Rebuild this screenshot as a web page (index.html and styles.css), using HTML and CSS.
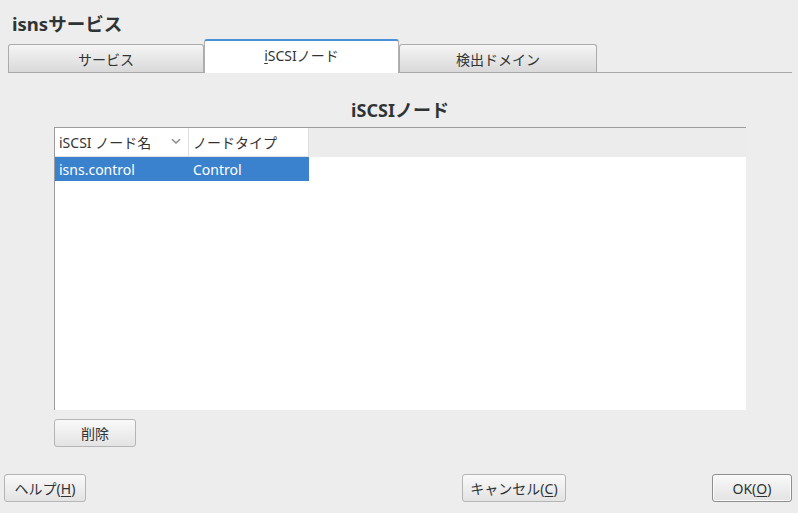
FILE: index.html
```html
<!DOCTYPE html>
<html lang="ja">
<head>
<meta charset="utf-8">
<title>isnsサービス</title>
<link rel="stylesheet" href="styles.css">
</head>
<body>
<div class="dialog">
  <h1 class="title">isnsサービス</h1>
  <div class="tabs">
    <div class="tab">サービス</div>
    <div class="tab active"><span class="u">i</span>SCSIノード</div>
    <div class="tab wide">検出ドメイン</div>
  </div>
  <div class="content">
    <h2 class="heading">iSCSIノード</h2>
    <div class="table">
      <div class="thead">
        <div class="th col1"><span>iSCSI ノード名</span>
          <svg class="chev" width="10" height="7" viewBox="0 0 10 7"><path d="M1 1.2 L5 5 L9 1.2" fill="none" stroke="#8a8a8a" stroke-width="1.5"/></svg>
        </div>
        <div class="th col2">ノードタイプ</div>
        <div class="th rest"></div>
      </div>
      <div class="tr selected">
        <div class="td col1">isns.control</div>
        <div class="td col2">Control</div>
      </div>
    </div>
    <div class="row-actions">
      <button class="btn del">削除</button>
    </div>
  </div>
  <div class="footer">
    <button class="btn help">ヘルプ(<span class="u">H</span>)</button>
    <div class="spacer"></div>
    <button class="btn cancel">キャンセル(<span class="u">C</span>)</button>
    <div class="spacer2"></div>
    <button class="btn ok">OK(<span class="u">O</span>)</button>
  </div>
</div>
</body>
</html>
```

FILE: styles.css
```css
* { box-sizing: border-box; }
html, body {
  margin: 0;
  padding: 0;
  background: #ededed;
}
body {
  width: 798px;
  height: 513px;
  overflow: hidden;
  font-family: "Noto Sans", "Noto Sans CJK JP", sans-serif;
  font-size: 14px;
  color: #2e3436;
}
.dialog {
  display: flex;
  flex-direction: column;
  height: 513px;
}
.title {
  margin: 0;
  padding: 11px 0 0 12px;
  height: 39px;
  font-size: 18.5px;
  font-weight: bold;
  line-height: 26px;
  color: #2e3436;
}
.tabs {
  display: flex;
  align-items: flex-end;
  margin: 0 6px 0 8px;
  height: 34px;
  border-bottom: 1px solid #a8a8a8;
}
.tab {
  width: 196px;
  height: 28px;
  display: flex;
  align-items: center;
  justify-content: center;
  border: 1px solid #ababab;
  border-bottom: none;
  border-radius: 3px 3px 0 0;
  background: linear-gradient(#f5f5f5, #d9d9d9);
  color: #333;
  font-size: 14px;
}
.tab.active {
  width: 195px;
  height: 34px;
  margin-bottom: -1px;
  background: #ffffff;
  border-color: #b0b0b0;
  border-top: 2px solid #4a90d9;
  padding-bottom: 4px;
}
.tab.wide { width: 198px; }
.u {
  text-decoration: underline;
  text-underline-offset: 2px;
}
.content {
  display: flex;
  flex-direction: column;
  padding: 0 52px 0 54px;
  height: 376px;
}
.heading {
  margin: 0;
  height: 54px;
  padding-top: 25px;
  text-align: center;
  font-size: 18px;
  font-weight: bold;
  line-height: 24px;
  color: #2e3436;
}
.table {
  height: 283px;
  background: #ffffff;
  border-left: 1px solid #9c9c9c;
  border-top: 1px solid #9c9c9c;
}
.thead {
  display: flex;
  height: 29px;
}
.th {
  height: 29px;
  display: flex;
  align-items: center;
  padding-left: 4px;
  background: #ffffff;
  border-right: 1px solid #dedede;
  border-bottom: 1px solid #e2e2e2;
  color: #333;
}
.th.rest {
  flex: 1;
  background: #ececec;
  border: none;
}
.col1 { width: 134px; }
.col2 { width: 120px; }
.th.col1 { justify-content: space-between; padding-right: 7px; }
.chev { margin-top: -2px; }
.tr {
  display: flex;
  width: 254px;
  height: 24px;
}
.tr.selected {
  background: #3a82cd;
  color: #ffffff;
}
.td {
  display: flex;
  align-items: center;
  padding-left: 4px;
}
.row-actions {
  display: flex;
  padding-top: 9px;
}
.btn {
  height: 28px;
  padding: 0;
  font-family: "Noto Sans", "Noto Sans CJK JP", sans-serif;
  font-size: 14px;
  color: #2e3436;
  background: linear-gradient(#f9f9f9, #e3e3e3);
  border: 1px solid #b5b5b5;
  border-radius: 3px;
}
.btn.del { width: 82px; }
.footer {
  display: flex;
  align-items: flex-start;
  padding: 25px 6px 0 4px;
}
.btn.help { width: 82px; }
.spacer { flex: 1; }
.btn.cancel { width: 104px; }
.spacer2 { width: 146px; }
.btn.ok {
  width: 80px;
  border: 1px solid #8e8e8e;
  box-shadow: inset 0 0 0 1px #fbfbfb;
}
```
